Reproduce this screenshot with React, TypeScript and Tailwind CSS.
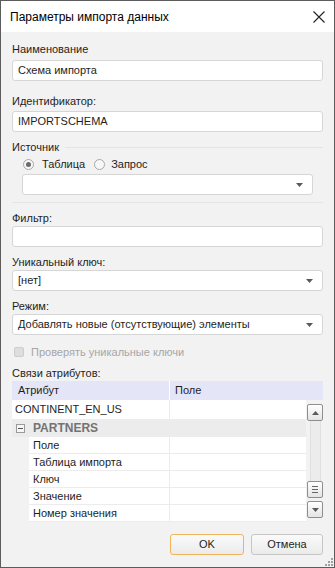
import type { ReactNode } from 'react';

const FONT = { fontFamily: '"Liberation Sans", Arial, sans-serif' };

function Arrow({ className = '' }: { className?: string }) {
  return (
    <svg width="7" height="4" viewBox="0 0 7 4" className={className}>
      <path d="M0 0h7L3.5 4z" fill="#5a5a5a" />
    </svg>
  );
}

function Label({ children, className = '' }: { children: ReactNode; className?: string }) {
  return <div className={`h-[16px] leading-[16px] text-[11px] text-[#1e1e1e] ${className}`}>{children}</div>;
}

function Input({ value = '', className = '' }: { value?: string; className?: string }) {
  return (
    <div className={`h-[21px] bg-white border border-[#d6d6d6] rounded-[3px] px-[5px] leading-[19px] text-[11px] text-[#1e1e1e] ${className}`}>
      {value}
    </div>
  );
}

function Combo({ value = '', className = '' }: { value?: string; className?: string }) {
  return (
    <div className={`h-[21px] bg-white border border-[#d6d6d6] rounded-[3px] pl-[5px] pr-[9px] flex items-center justify-between text-[11px] text-[#1e1e1e] ${className}`}>
      <span>{value}</span>
      <Arrow />
    </div>
  );
}

function Radio({ checked }: { checked?: boolean }) {
  return (
    <span className="w-[11px] h-[11px] rounded-full border border-[#a8a8a8] bg-[#f7f7f7] flex items-center justify-center">
      {checked && <span className="w-[5px] h-[5px] rounded-full bg-[#6a6a6a]" />}
    </span>
  );
}

function ScrollBtn({ children }: { children: ReactNode }) {
  return (
    <div className="w-[16px] h-[17px] rounded-[2px] border border-[#8e8e8e] bg-gradient-to-b from-white to-[#e4e4e4] flex items-center justify-center">
      {children}
    </div>
  );
}

const CHILDREN = ['Поле', 'Таблица импорта', 'Ключ', 'Значение', 'Номер значения'];

export default function App() {
  return (
    <div style={FONT} className="w-[335px] h-[568px] flex flex-col border border-[#5c5c5c] bg-[#f2f2f2] overflow-hidden">
      {/* Title bar */}
      <div className="h-[31px] shrink-0 bg-white flex items-center justify-between pl-[9px] pr-[9px]">
        <span className="text-[12px] text-black">Параметры импорта данных</span>
        <svg width="12" height="12" viewBox="0 0 12 12">
          <path d="M0.5 0.5l11 11M11.5 0.5l-11 11" stroke="#222" strokeWidth="1.1" />
        </svg>
      </div>

      <div className="flex-1 flex flex-col px-[11px] pt-[9px]">
        <Label>Наименование</Label>
        <Input className="mt-[3px]" value="Схема импорта" />

        <Label className="mt-[12px]">Идентификатор:</Label>
        <Input className="mt-[2px]" value="IMPORTSCHEMA" />

        <div className="mt-[7px] flex items-center gap-[6px]">
          <Label>Источник</Label>
          <div className="flex-1 h-px bg-[#e4e4e4]" />
        </div>
        <div className="h-[16px] mt-[1px] pl-[11px] flex items-center text-[11px] text-[#1e1e1e]">
          <Radio checked />
          <span className="ml-[8px]">Таблица</span>
          <span className="ml-[9px]"><Radio /></span>
          <span className="ml-[6px]">Запрос</span>
        </div>
        <Combo className="mt-[2px] mx-[10px]" />
        <div className="mt-[7px] h-px bg-[#e4e4e4]" />

        <Label className="mt-[7px]">Фильтр:</Label>
        <Input />

        <Label className="mt-[7px]">Уникальный ключ:</Label>
        <Combo value="[нет]" />

        <Label className="mt-[7px]">Режим:</Label>
        <Combo value="Добавлять новые (отсутствующие) элементы" />

        <div className="mt-[9px] h-[16px] flex items-center text-[11px] text-[#a6a6a6]">
          <span className="ml-[2px] w-[10px] h-[10px] rounded-[2px] border border-[#cdcdcd] bg-[#dedede]" />
          <span className="ml-[7px]">Проверять уникальные ключи</span>
        </div>

        <Label className="mt-[5px]">Связи атрибутов:</Label>
        <div className="flex flex-col text-[11px] text-[#1e1e1e]">
          <div className="h-[19px] bg-[#e5e5f8] flex items-center">
            <div className="w-[158px] pl-[6px] border-r border-white h-full leading-[19px]">Атрибут</div>
            <div className="pl-[5px]">Поле</div>
          </div>
          <div className="flex">
            <div className="w-[294px] flex flex-col">
              <div className="h-[19px] bg-white flex">
                <div className="w-[158px] pl-[3px] leading-[19px] border-r border-[#ececec]">CONTINENT_EN_US</div>
              </div>
              <div className="h-[18px] bg-[#ececec] flex items-center">
                <span className="ml-[4px] w-[9px] h-[9px] border border-[#9a9a9a] bg-[#f6f6f6] flex items-center justify-center">
                  <span className="w-[5px] h-px bg-[#555]" />
                </span>
                <span className="ml-[8px] font-bold text-[#737373] text-[12px]">PARTNERS</span>
              </div>
              {CHILDREN.map(c => (
                <div key={c} className="h-[17px] flex">
                  <div className="w-[17px]" />
                  <div className="flex-1 bg-white flex border-b border-[#ececec]">
                    <div className="w-[141px] pl-[4px] leading-[16px] border-r border-[#ececec]">{c}</div>
                  </div>
                </div>
              ))}
            </div>
            <div className="w-[17px] flex flex-col items-center pt-[4px] pl-px">
              <ScrollBtn><Arrow className="rotate-180" /></ScrollBtn>
              <div className="w-[11px] h-[60px] bg-[#ececec] border-x border-[#e0e0e0]" />
              <ScrollBtn>
                <span className="flex flex-col gap-[2px]">
                  <span className="w-[6px] h-px bg-[#666]" />
                  <span className="w-[6px] h-px bg-[#666]" />
                  <span className="w-[6px] h-px bg-[#666]" />
                </span>
              </ScrollBtn>
              <div className="mt-[3px]"><ScrollBtn><Arrow /></ScrollBtn></div>
            </div>
          </div>
        </div>

        <div className="mt-[12px] flex justify-end gap-[7px] text-[11px] text-[#1e1e1e]">
          <div className="w-[74px] h-[21px] rounded-[3px] border border-[#f0b45a] bg-gradient-to-b from-[#fafafa] to-[#ebebeb] flex items-center justify-center">OK</div>
          <div className="w-[72px] h-[21px] rounded-[3px] border border-[#c6c6c6] bg-gradient-to-b from-[#fafafa] to-[#ebebeb] flex items-center justify-center">Отмена</div>
        </div>
        <div className="flex-1 flex items-end justify-end -mr-[10px] pb-px">
          <svg width="8" height="8" viewBox="0 0 8 8">
            <g fill="#a0a0a0">
              <rect x="6" y="0" width="2" height="2" />
              <rect x="3" y="3" width="2" height="2" />
              <rect x="6" y="3" width="2" height="2" />
              <rect x="0" y="6" width="2" height="2" />
              <rect x="3" y="6" width="2" height="2" />
              <rect x="6" y="6" width="2" height="2" />
            </g>
          </svg>
        </div>
      </div>
    </div>
  );
}
